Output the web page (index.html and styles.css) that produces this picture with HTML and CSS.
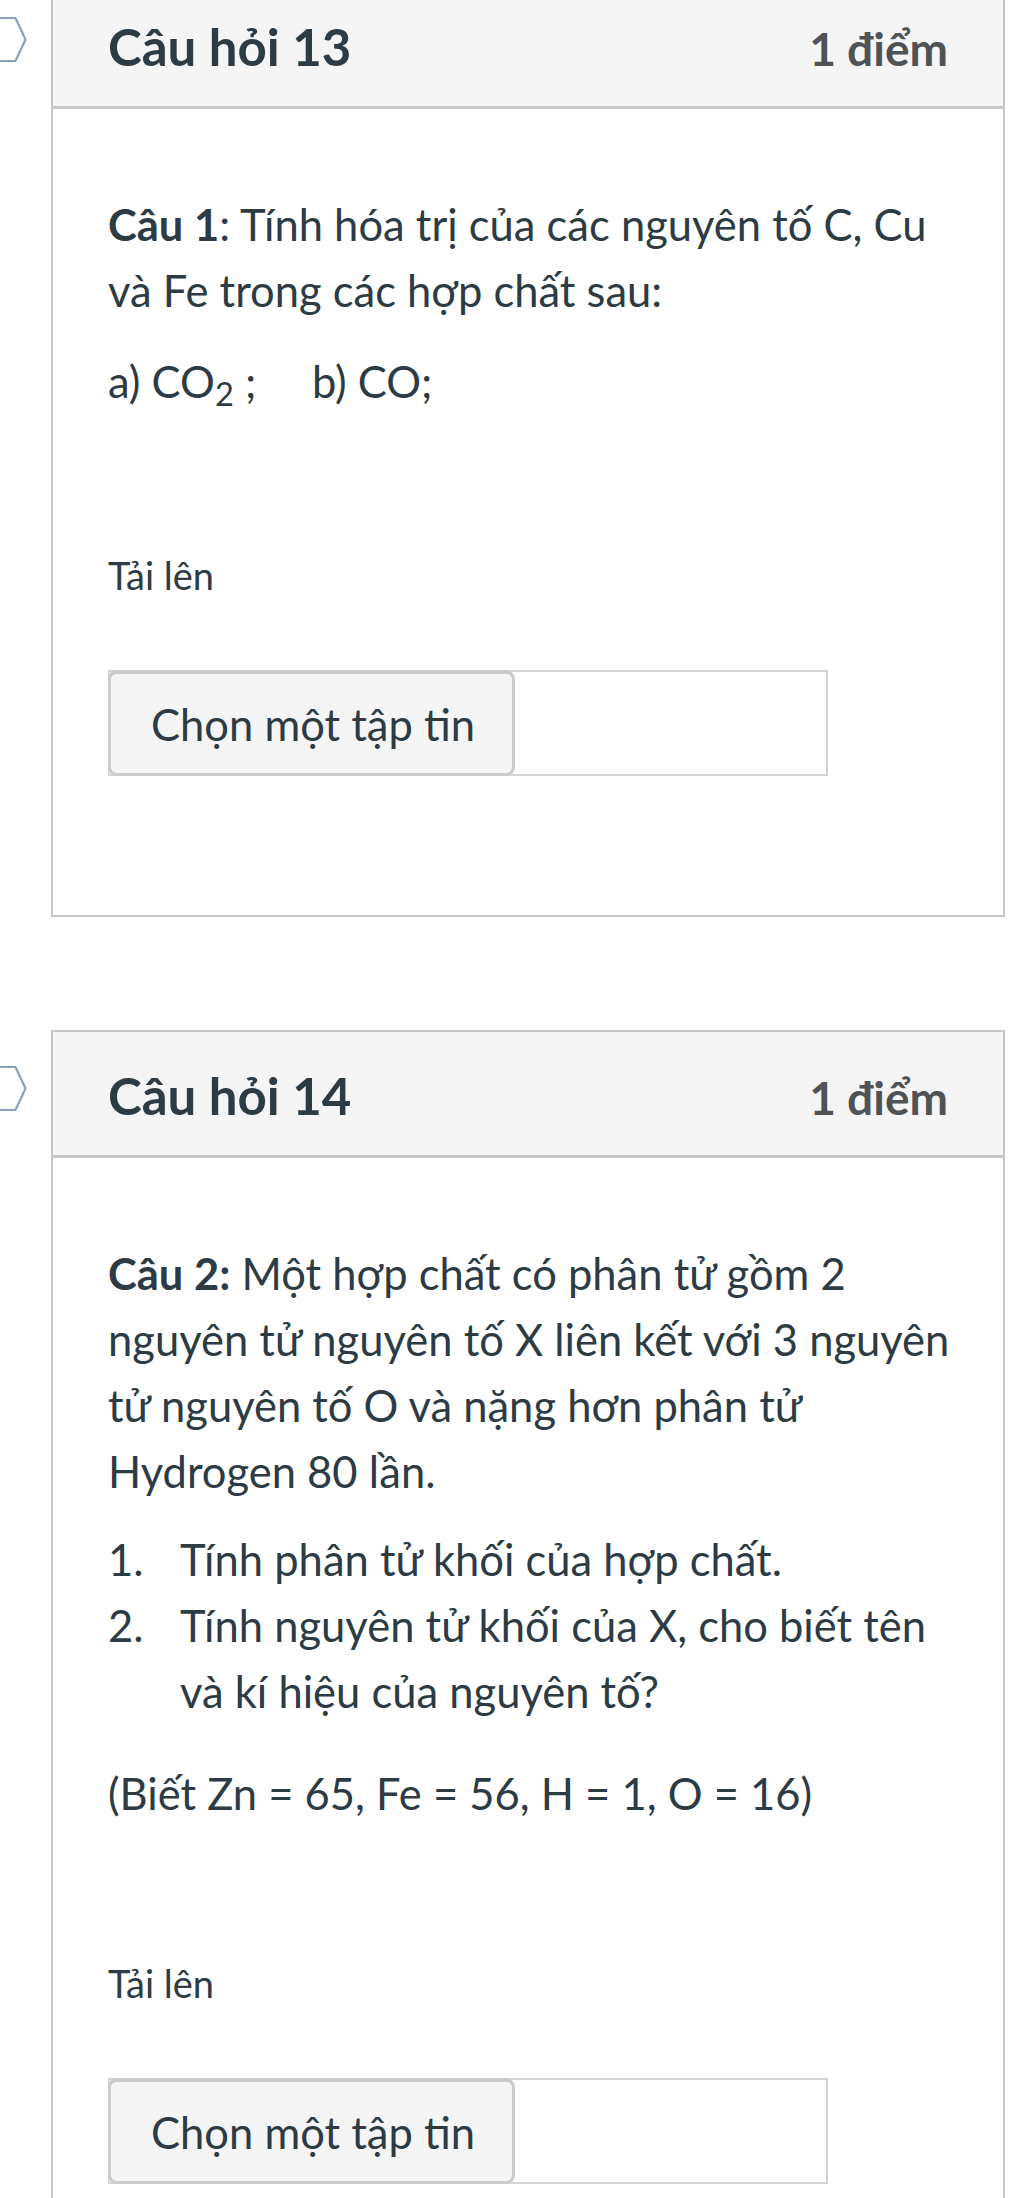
FILE: index.html
```html
<!DOCTYPE html>
<html lang="vi">
<head>
<meta charset="utf-8">
<title>Câu hỏi</title>
<link rel="stylesheet" href="styles.css">
</head>
<body>
<div class="page">
  <div class="question">
    <svg class="flag" width="28" height="47" viewBox="0 0 28 47" aria-hidden="true">
      <path d="M-4 2 H15.5 L25.5 23.5 L15.5 45 H-4" fill="none" stroke="#8ea2b6" stroke-width="2.2" stroke-linejoin="round"/>
    </svg>
    <div class="card">
      <div class="card-header">
        <span class="q-title">Câu hỏi 13</span>
        <span class="q-points">1 điểm</span>
      </div>
      <div class="card-body">
        <div class="q-text">
          <p><strong>Câu 1</strong>: Tính hóa trị của các nguyên tố C, Cu và Fe trong các hợp chất sau:</p>
          <p>a) CO<sub>2</sub> ;&nbsp;&nbsp;&nbsp;&nbsp; b) CO;</p>
        </div>
        <div class="upload">
          <div class="upload-label">Tải lên</div>
          <div class="file-input">
            <span class="file-btn">Chọn một tập tin</span>
          </div>
        </div>
      </div>
    </div>
  </div>

  <div class="question">
    <svg class="flag" width="28" height="47" viewBox="0 0 28 47" aria-hidden="true">
      <path d="M-4 2 H15.5 L25.5 23.5 L15.5 45 H-4" fill="none" stroke="#8ea2b6" stroke-width="2.2" stroke-linejoin="round"/>
    </svg>
    <div class="card">
      <div class="card-header">
        <span class="q-title">Câu hỏi 14</span>
        <span class="q-points">1 điểm</span>
      </div>
      <div class="card-body">
        <div class="q-text">
          <p><strong>Câu 2:</strong> Một hợp chất có phân tử gồm 2 nguyên tử nguyên tố X liên kết với 3 nguyên tử nguyên tố O và nặng hơn phân tử Hydrogen 80 lần.</p>
          <ol class="q-list">
            <li><span class="num">1.</span><span>Tính phân tử khối của hợp chất.</span></li>
            <li><span class="num">2.</span><span>Tính nguyên tử khối của X, cho biết tên và kí hiệu của nguyên tố?</span></li>
          </ol>
          <p>(Biết Zn = 65, Fe = 56, H = 1, O = 16)</p>
        </div>
        <div class="upload upload-second">
          <div class="upload-label">Tải lên</div>
          <div class="file-input">
            <span class="file-btn">Chọn một tập tin</span>
          </div>
        </div>
      </div>
    </div>
  </div>
</div>
</body>
</html>
```

FILE: styles.css
```css
* { box-sizing: border-box; }
html, body {
  margin: 0;
  padding: 0;
  background: #ffffff;
}
body {
  font-family: Lato, "Noto Sans", "Liberation Sans", sans-serif;
  color: #2d3b45;
  overflow: hidden;
}
.page {
  margin-top: -19px;
  padding: 0 19px 0 51px;
  display: flex;
  flex-direction: column;
  gap: 113px;
}
.question {
  position: relative;
}
.flag {
  position: absolute;
  left: -51px;
  top: 35px;
}
.card {
  border: 2px solid #c4c8cb;
}
.card-header {
  background: #f5f5f5;
  border-bottom: 3px solid #c4c8cb;
  display: flex;
  justify-content: space-between;
  align-items: baseline;
  padding: 34px 55px 27px 55px;
  font-weight: 700;
  font-size: 51px;
  line-height: 60px;
}
.q-title { color: #2d3b45; }
.q-points { color: #4f5356; font-size: 46px; }
.card-body {
  padding: 82px 40px 139px 55px;
}
.q-text {
  font-size: 43.5px;
  line-height: 66px;
}
.q-text p {
  margin: 0 0 25px 0;
}
.q-text p:last-child { margin-bottom: 0; }
.q-text strong { font-weight: 700; }
sub {
  font-size: 0.75em;
  line-height: 0;
  vertical-align: -0.25em;
}
.q-list {
  list-style: none;
  margin: -3px 0 36px 0;
  padding: 0;
}
.q-list li {
  display: grid;
  grid-template-columns: 72px 1fr;
  margin-bottom: 0;
}
.upload {
  margin-top: 128px;
}
.upload-second {
  margin-top: 124px;
}
.upload-label {
  font-size: 38px;
  line-height: 66px;
  margin-bottom: 62px;
}
.file-input {
  width: 720px;
  height: 106px;
  border: 2px solid #d4d4d4;
  display: flex;
}
.file-btn {
  margin: -2px 0 -2px -2px;
  background: #f5f5f5;
  border: 3px solid #c9ccce;
  border-top-width: 4px;
  border-radius: 9px;
  width: 407px;
  display: flex;
  align-items: center;
  padding-left: 40px;
  font-size: 43.5px;
  color: #2d3b45;
}
```
